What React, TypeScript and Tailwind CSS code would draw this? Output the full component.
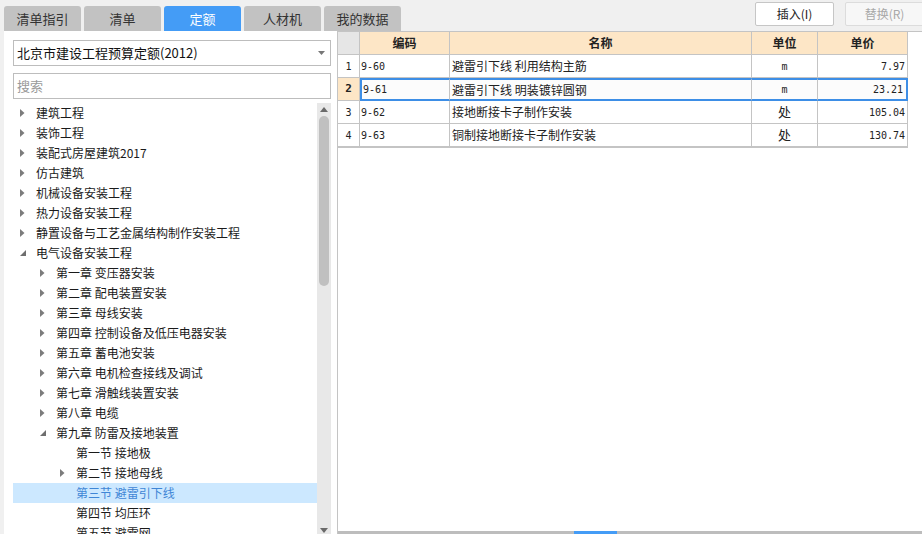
import React from 'react';

type Node = { label: string; level: number; arrow?: 'closed' | 'open'; selected?: boolean };

const tree: Node[] = [
  { label: '建筑工程', level: 0, arrow: 'closed' },
  { label: '装饰工程', level: 0, arrow: 'closed' },
  { label: '装配式房屋建筑2017', level: 0, arrow: 'closed' },
  { label: '仿古建筑', level: 0, arrow: 'closed' },
  { label: '机械设备安装工程', level: 0, arrow: 'closed' },
  { label: '热力设备安装工程', level: 0, arrow: 'closed' },
  { label: '静置设备与工艺金属结构制作安装工程', level: 0, arrow: 'closed' },
  { label: '电气设备安装工程', level: 0, arrow: 'open' },
  { label: '第一章 变压器安装', level: 1, arrow: 'closed' },
  { label: '第二章 配电装置安装', level: 1, arrow: 'closed' },
  { label: '第三章 母线安装', level: 1, arrow: 'closed' },
  { label: '第四章 控制设备及低压电器安装', level: 1, arrow: 'closed' },
  { label: '第五章 蓄电池安装', level: 1, arrow: 'closed' },
  { label: '第六章 电机检查接线及调试', level: 1, arrow: 'closed' },
  { label: '第七章 滑触线装置安装', level: 1, arrow: 'closed' },
  { label: '第八章 电缆', level: 1, arrow: 'closed' },
  { label: '第九章 防雷及接地装置', level: 1, arrow: 'open' },
  { label: '第一节 接地极', level: 2 },
  { label: '第二节 接地母线', level: 2, arrow: 'closed' },
  { label: '第三节 避雷引下线', level: 2, selected: true },
  { label: '第四节 均压环', level: 2 },
  { label: '第五节 避雷网', level: 2 },
];

const rows = [
  { no: '1', code: '9-60', name: '避雷引下线\u00a0利用结构主筋', unit: 'm', price: '7.97' },
  { no: '2', code: '9-61', name: '避雷引下线\u00a0明装镀锌圆钢', unit: 'm', price: '23.21', active: true },
  { no: '3', code: '9-62', name: '接地断接卡子制作安装', unit: '处', price: '105.04' },
  { no: '4', code: '9-63', name: '铜制接地断接卡子制作安装', unit: '处', price: '130.74' },
];

const tabs = ['清单指引', '清单', '定额', '人材机', '我的数据'];

function Arrow({ kind }: { kind?: 'closed' | 'open' }) {
  if (!kind) return <span className="w-[16px]" />;
  return (
    <span className="w-[16px] flex items-center">
      {kind === 'closed' ? (
        <svg width="5" height="8" viewBox="0 0 5 8">
          <polygon points="0,0 4.5,4 0,8" fill="#7c7c7c" />
        </svg>
      ) : (
        <svg width="6" height="6" viewBox="0 0 6 6">
          <polygon points="6,0 6,6 0,6" fill="#6e6e6e" />
        </svg>
      )}
    </span>
  );
}

const mono = "font-['DejaVu_Sans_Mono','Liberation_Mono',monospace] text-[10px]";

export default function App() {
  return (
    <div className="w-[922px] h-[534px] bg-[#f0f0f0] flex flex-col overflow-hidden font-['Noto_Sans_CJK_SC','Noto_Sans',sans-serif] text-[#222]">
      {/* top strip: tabs + buttons */}
      <div className="h-[31px] flex shrink-0">
        <div className="flex items-end gap-[3px] pl-[4px]">
          {tabs.map((t) => (
            <div
              key={t}
              className={
                'w-[77px] h-[25px] rounded-t-[3px] flex items-center justify-center text-[13px] ' +
                (t === '定额' ? 'bg-[#449cf6] text-white' : 'bg-[#c2c2c2] text-[#333]')
              }
            >
              {t}
            </div>
          ))}
        </div>
        <div className="ml-auto flex items-start gap-[11px] pt-[2px] -mr-[2px]">
          <div className="w-[79px] h-[24px] bg-white border border-[#c6c6c6] rounded-[2px] flex items-center justify-center text-[12px] text-[#222]">
            插入(I)
          </div>
          <div className="w-[79px] h-[24px] bg-[#f7f7f7] border border-[#dcdcdc] rounded-[2px] flex items-center justify-center text-[12px] text-[#a8a8a8]">
            替换(R)
          </div>
        </div>
      </div>

      <div className="flex flex-1 min-h-0">
        {/* left panel */}
        <div className="ml-[4px] w-[333px] bg-white flex flex-col pl-[9px] pr-[6px] pt-[9px] min-h-0">
          <div className="h-[26px] border border-[#bdbdbd] flex items-center px-[3px] text-[13px] text-[#111]">
            <span>北京市建设工程预算定额(2012)</span>
            <svg className="ml-auto mr-[2px]" width="7" height="4" viewBox="0 0 7 4">
              <polygon points="0,0 7,0 3.5,4" fill="#777" />
            </svg>
          </div>
          <div className="mt-[7px] h-[26px] border border-[#bdbdbd] flex items-center px-[3px] text-[13px] text-[#9a9a9a]">
            搜索
          </div>
          <div className="mt-[4px] flex flex-1 min-h-0">
            <div className="flex-1 overflow-hidden">
              {tree.map((n) => (
                <div
                  key={n.label}
                  className={
                    'h-[20px] flex items-center text-[12px] ' +
                    (n.selected ? 'bg-[#cce8ff] text-[#3f86d6]' : 'text-[#1a1a1a]')
                  }
                >
                  <span
                    className={n.level === 0 ? 'w-[7px]' : n.level === 1 ? 'w-[27px]' : 'w-[47px]'}
                  />
                  <Arrow kind={n.arrow} />
                  <span className="whitespace-nowrap">{n.label}</span>
                </div>
              ))}
            </div>
            {/* vertical scrollbar */}
            <div className="w-[14px] bg-[#e8e8e8] flex flex-col items-center">
              <svg className="mt-[4px]" width="8" height="5" viewBox="0 0 8 5">
                <polygon points="0,5 8,5 4,0" fill="#6a6a6a" />
              </svg>
              <div className="mt-[4px] w-[10px] h-[170px] rounded-[5px] bg-[#c0c0c0]" />
              <svg className="mt-auto mb-[1px]" width="8" height="5" viewBox="0 0 8 5">
                <polygon points="0,0 8,0 4,5" fill="#6a6a6a" />
              </svg>
            </div>
          </div>
        </div>

        {/* right panel */}
        <div className="flex-1 bg-white border-l border-t border-[#c4c4c4] flex flex-col min-w-0">
          <div className="grid grid-cols-[22px_90px_302px_66px_90px] w-[570px] border-b border-r border-[#c4c4c4] text-[12px]">
            <div className="h-[23px] bg-[#e6e6e6] border-r border-b border-[#c4c4c4]" />
            {['编码', '名称', '单位', '单价'].map((h) => (
              <div
                key={h}
                className="h-[23px] bg-[#fde6c6] border-r border-b border-[#c4c4c4] last:border-r-0 flex items-center justify-center font-bold text-[#222]"
              >
                {h}
              </div>
            ))}
            {rows.map((r) => (
              <React.Fragment key={r.no}>
                <div
                  className={
                    'h-[23px] border-r border-b border-[#c4c4c4] flex items-center justify-center ' +
                    mono +
                    (r.active ? ' bg-[#fde6c6] font-bold text-[11px]' : ' bg-white')
                  }
                >
                  {r.no}
                </div>
                <div
                  className={
                    'h-[23px] flex items-center pl-[1px] border-r border-[#c4c4c4] ' +
                    mono +
                    (r.active ? ' border-y-2 border-l-2 border-y-[#3d8ee6] border-l-[#3d8ee6] bg-[#fcfcfc]' : ' border-b')
                  }
                >
                  {r.code}
                </div>
                <div
                  className={
                    'h-[23px] flex items-center pl-[2px] border-r border-[#c4c4c4] ' +
                    (r.active ? 'border-y-2 border-y-[#3d8ee6] bg-[#fcfcfc]' : 'border-b')
                  }
                >
                  {r.name}
                </div>
                <div
                  className={
                    'h-[23px] flex items-center justify-center border-r border-[#c4c4c4] ' +
                    (r.unit === 'm' ? mono : 'text-[13px]') +
                    (r.active ? ' border-y-2 border-y-[#3d8ee6] bg-[#fcfcfc]' : ' border-b')
                  }
                >
                  {r.unit}
                </div>
                <div
                  className={
                    'h-[23px] flex items-center justify-end pr-[3px] ' +
                    mono +
                    (r.active ? ' border-y-2 border-r-2 border-[#3d8ee6] bg-[#fcfcfc]' : ' border-b border-[#c4c4c4]')
                  }
                >
                  {r.price}
                </div>
              </React.Fragment>
            ))}
          </div>
          <div className="flex-1" />
          {/* horizontal scrollbar strip */}
          <div className="h-[3px] bg-[#bdbdbd] flex">
            <div className="ml-[236px] w-[43px] bg-[#449cf6]" />
          </div>
        </div>
      </div>
    </div>
  );
}
